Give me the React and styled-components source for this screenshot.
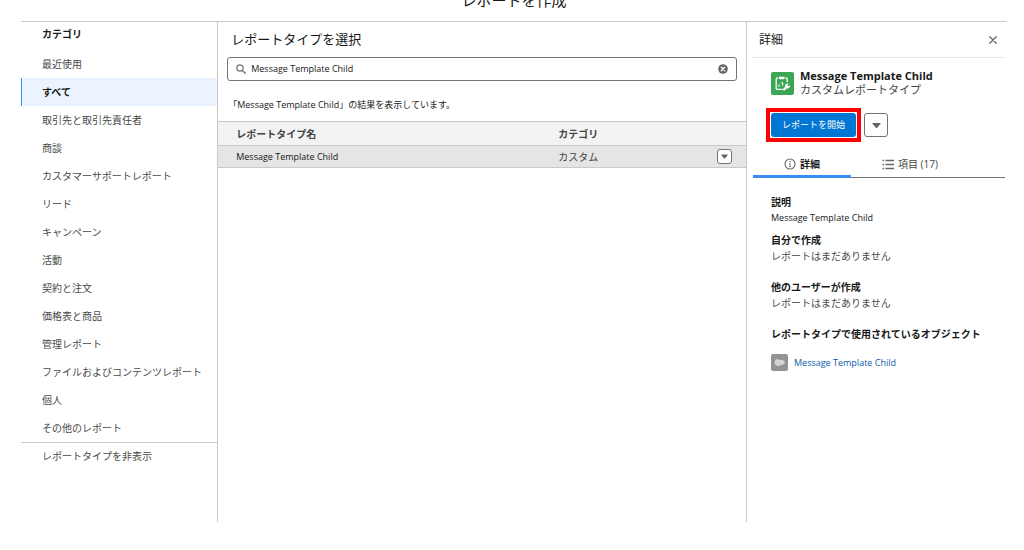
import React, { useState } from "react";
import styled, { createGlobalStyle, css } from "styled-components";

const categories = [
  "最近使用",
  "すべて",
  "取引先と取引先責任者",
  "商談",
  "カスタマーサポートレポート",
  "リード",
  "キャンペーン",
  "活動",
  "契約と注文",
  "価格表と商品",
  "管理レポート",
  "ファイルおよびコンテンツレポート",
  "個人",
  "その他のレポート",
];

const SearchIcon = () => (
  <svg width="10" height="10" viewBox="0 0 10 10" fill="none" stroke="#747474" strokeWidth="1.2" aria-hidden="true">
    <circle cx="4" cy="4" r="3.2" />
    <path d="M6.4 6.4 9.3 9.3" strokeLinecap="round" strokeWidth="1.4" />
  </svg>
);

const ClearIcon = () => (
  <svg width="10" height="10" viewBox="0 0 10 10" aria-hidden="true">
    <circle cx="5" cy="5" r="4.8" fill="#666" />
    <path d="M3.3 3.3 6.7 6.7M6.7 3.3 3.3 6.7" stroke="#fff" strokeWidth="1.3" strokeLinecap="round" />
  </svg>
);

const CloseIcon = () => (
  <svg width="8" height="8" viewBox="0 0 8 8" aria-hidden="true">
    <path d="M0.8 0.8 7.2 7.2M7.2 0.8 0.8 7.2" stroke="#666" strokeWidth="1.3" strokeLinecap="round" />
  </svg>
);

const ArrowIcon = ({ size = 7 }) => (
  <svg width={size} height={size} viewBox="0 0 8 8" aria-hidden="true">
    <path d="M0.7 1.8h6.6c.4 0 .5.4.3.7L4.4 6.3c-.2.3-.6.3-.8 0L.4 2.5c-.2-.3-.1-.7.3-.7z" fill="#666" />
  </svg>
);

const InfoIcon = () => (
  <svg width="12" height="12" viewBox="0 0 12 12" fill="none" stroke="#666" aria-hidden="true">
    <circle cx="6" cy="6" r="5" strokeWidth="1.1" />
    <path d="M6 5.3v3.2M5.2 8.5h1.6M5.3 5.3H6" strokeWidth="0.9" />
    <circle cx="6" cy="3.6" r="0.7" fill="#666" stroke="none" />
  </svg>
);

const ListIcon = () => (
  <svg width="12" height="12" viewBox="0 0 12 12" stroke="#666" aria-hidden="true">
    <path d="M3.5 2.5H12M3.5 6.5H12M3.5 10.5H12" strokeWidth="1.3" />
    <path d="M0.5 2.5H2.2M0.5 6.5H2.2M0.5 10.5H2.2" strokeWidth="1.3" />
  </svg>
);

const ReportTypeIcon = () => (
  <svg width="23" height="23" viewBox="0 0 23 23" aria-hidden="true">
    <rect width="23" height="23" rx="2" fill="#3ba755" />
    <path d="M11.5 17.4H6.4a1.2 1.2 0 0 1-1.2-1.2V7.2A1.2 1.2 0 0 1 6.4 6H7M14.4 6h.6a1.2 1.2 0 0 1 1.2 1.2v3" fill="none" stroke="#fff" strokeWidth="1.3" />
    <path d="M7.9 4.8h5.6v1.5a1 1 0 0 1-1 1H8.9a1 1 0 0 1-1-1z" fill="#fff" />
    <path d="M8 12.6v2.4M10.2 10.8h1.4v3" fill="none" stroke="#fff" strokeWidth="1.1" />
    <path d="M17.6 11.6a2.6 2.6 0 0 0-3.4 3.1l-2 2a1.1 1.1 0 0 0 1.6 1.6l2-2a2.6 2.6 0 0 0 3.1-3.4l-1.5 1.4-1.3-1.2z" fill="#fff" />
  </svg>
);

const CloudIcon = () => (
  <svg width="17" height="17" viewBox="0 0 17 17" aria-hidden="true">
    <rect width="17" height="17" rx="2" fill="#939393" />
    <path d="M7.2 5.5a2.4 2.4 0 0 1 1.8.6 2.5 2.5 0 0 1 3 .1 2.1 2.1 0 0 1 1.8 2.2 2.1 2.1 0 0 1-2.6 2 1.8 1.8 0 0 1-2.4.8 2.2 2.2 0 0 1-3.8-.1A2 2 0 0 1 3.5 9 2.2 2.2 0 0 1 4 7.4a2 2 0 0 1 3.2-1.9z" fill="#d4d4d4" />
  </svg>
);

function App() {
  const [selected, setSelected] = useState("すべて");
  const [search, setSearch] = useState("Message Template Child");
  const [tab, setTab] = useState("details");

  return (
    <>
      <GlobalStyle />
      <StyledModal>
        <StyledTitle>レポートを作成</StyledTitle>
        <StyledBody>
          <StyledSidebar>
            <StyledSidebarTitle>カテゴリ</StyledSidebarTitle>
            <nav>
              {categories.map((name) => (
                <StyledCategory key={name} $active={name === selected} onClick={() => setSelected(name)}>
                  {name}
                </StyledCategory>
              ))}
            </nav>
            <StyledSidebarFooter>
              <StyledCategory>レポートタイプを非表示</StyledCategory>
            </StyledSidebarFooter>
          </StyledSidebar>

          <StyledMain>
            <StyledMainTitle>レポートタイプを選択</StyledMainTitle>
            <StyledSearch>
              <SearchIcon />
              <input
                type="text"
                aria-label="レポートタイプを検索"
                value={search}
                onChange={(e) => setSearch(e.target.value)}
              />
              <StyledIconButton aria-label="クリア" onClick={() => setSearch("")}>
                <ClearIcon />
              </StyledIconButton>
            </StyledSearch>
            <StyledResult>「Message Template Child」の結果を表示しています。</StyledResult>
            <StyledTable>
              <thead>
                <tr>
                  <th className="name">レポートタイプ名</th>
                  <th>カテゴリ</th>
                  <th className="action"></th>
                </tr>
              </thead>
              <tbody>
                <tr>
                  <td>Message Template Child</td>
                  <td className="category">カスタム</td>
                  <td className="action">
                    <StyledMenuButton $size={15} aria-label="アクションを表示">
                      <ArrowIcon />
                    </StyledMenuButton>
                  </td>
                </tr>
              </tbody>
            </StyledTable>
          </StyledMain>

          <StyledDetail>
            <StyledDetailHeader>
              <h2>詳細</h2>
              <StyledIconButton aria-label="閉じる">
                <CloseIcon />
              </StyledIconButton>
            </StyledDetailHeader>
            <StyledRecord>
              <ReportTypeIcon />
              <div>
                <h3>Message Template Child</h3>
                <p>カスタムレポートタイプ</p>
              </div>
            </StyledRecord>
            <StyledActions>
              <StyledHighlight>
                <StyledStartButton>レポートを開始</StyledStartButton>
              </StyledHighlight>
              <StyledMenuButton $size={24} aria-label="その他のアクション">
                <ArrowIcon size={9} />
              </StyledMenuButton>
            </StyledActions>
            <StyledTabs role="tablist">
              <StyledTab role="tab" aria-selected={tab === "details"} $active={tab === "details"} onClick={() => setTab("details")}>
                <InfoIcon />
                詳細
              </StyledTab>
              <StyledTab role="tab" aria-selected={tab === "fields"} $active={tab === "fields"} onClick={() => setTab("fields")}>
                <ListIcon />
                項目 (17)
              </StyledTab>
            </StyledTabs>
            <StyledSections>
              <StyledSection>
                <h4>説明</h4>
                <StyledLatin>Message Template Child</StyledLatin>
              </StyledSection>
              <StyledSection>
                <h4>自分で作成</h4>
                <p>レポートはまだありません</p>
              </StyledSection>
              <StyledSection $spaced>
                <h4>他のユーザーが作成</h4>
                <p>レポートはまだありません</p>
              </StyledSection>
              <StyledSection $spaced>
                <h4>レポートタイプで使用されているオブジェクト</h4>
                <StyledObject href="#">
                  <CloudIcon />
                  Message Template Child
                </StyledObject>
              </StyledSection>
            </StyledSections>
          </StyledDetail>
        </StyledBody>
      </StyledModal>
    </>
  );
}

const GlobalStyle = createGlobalStyle`
  * {
    box-sizing: border-box;
  }
  body {
    margin: 0;
    background: #fff;
    color: #181818;
    font-family: "Open Sans", "Noto Sans CJK JP", sans-serif;
    font-size: 10px;
    line-height: 16px;
    overflow: hidden;
  }
  h1, h2, h3, h4, p {
    margin: 0;
    font-size: inherit;
    font-weight: 400;
  }
  button, input {
    font-family: inherit;
    font-size: inherit;
    line-height: inherit;
    color: inherit;
  }
  button {
    cursor: pointer;
  }
  svg {
    display: block;
    flex-shrink: 0;
  }
`;

const StyledModal = styled.div`
  display: flex;
  flex-direction: column;
  min-height: 100vh;
  padding: 0 17px 28px 21px;
`;

const StyledTitle = styled.h1`
  margin-top: -21px;
  font-size: 15px;
  line-height: 42px;
  text-align: center;
`;

const StyledBody = styled.div`
  display: flex;
  flex: 1;
  border-top: 1px solid #c9c9c9;
`;

const StyledSidebar = styled.aside`
  flex: 0 0 20%;
  border-right: 1px solid #c9c9c9;
`;

const StyledSidebarTitle = styled.h2`
  margin-bottom: 4px;
  padding-left: 21px;
  font-weight: 700;
  line-height: 24px;
`;

const StyledCategory = styled.button`
  display: block;
  width: 100%;
  height: 28px;
  padding: 0 0 0 20px;
  border: none;
  border-left: 1px solid transparent;
  background: none;
  color: #4a4a4a;
  text-align: left;
  ${({ $active }) =>
    $active &&
    css`
      border-left-color: #3a8ef6;
      background: #ebf4fe;
      color: #181818;
      font-weight: 700;
    `}
`;

const StyledSidebarFooter = styled.div`
  border-top: 1px solid #c9c9c9;
  ${StyledCategory} {
    height: 26px;
  }
`;

const StyledMain = styled.main`
  flex: 1;
  min-width: 0;
`;

const StyledMainTitle = styled.h2`
  padding-left: 13px;
  font-size: 13px;
  line-height: 35px;
`;

const StyledSearch = styled.div`
  display: flex;
  align-items: center;
  gap: 5px;
  height: 24px;
  margin: 0 9px;
  padding: 0 8px;
  border: 1px solid #747474;
  border-radius: 3px;
  input {
    flex: 1;
    min-width: 0;
    padding: 0;
    border: none;
    outline: none;
    background: none;
    font-size: 9px;
  }
`;

const StyledIconButton = styled.button`
  display: flex;
  padding: 0;
  border: none;
  background: none;
`;

const StyledResult = styled.p`
  padding: 16px 0 8px 10px;
  font-size: 9px;
`;

const StyledTable = styled.table`
  width: 100%;
  border-collapse: collapse;
  table-layout: fixed;
  th, td {
    height: 22px;
    padding: 0 0 0 18px;
    border-bottom: 1px solid #c9c9c9;
    text-align: left;
  }
  th {
    height: 24px;
    border-top: 1px solid #c9c9c9;
    background: #f3f3f3;
    color: #444;
    font-weight: 700;
  }
  td {
    background: #e5e5e5;
    font-size: 9px;
  }
  .name {
    width: 61%;
  }
  .category {
    color: #444;
    font-size: 10px;
  }
  .action {
    width: 47px;
  }
`;

const StyledMenuButton = styled.button`
  display: flex;
  align-items: center;
  justify-content: center;
  width: ${({ $size }) => $size}px;
  height: ${({ $size }) => $size}px;
  padding: 0;
  border: 1px solid #747474;
  border-radius: 3px;
  background: #fff;
`;

const StyledDetail = styled.aside`
  flex: 0 0 261px;
  padding: 0 2px 0 6px;
  border-left: 1px solid #c9c9c9;
`;

const StyledDetailHeader = styled.div`
  display: flex;
  align-items: center;
  justify-content: space-between;
  height: 36px;
  padding: 0 8px 0 6px;
  border-bottom: 1px solid #e5e5e5;
  h2 {
    font-size: 12px;
  }
`;

const StyledRecord = styled.div`
  display: flex;
  align-items: center;
  gap: 6px;
  padding: 11px 0 0 18px;
  h3 {
    font-size: 11px;
    font-weight: 700;
    line-height: 14px;
  }
  p {
    color: #444;
    font-size: 11px;
    line-height: 14px;
  }
`;

const StyledActions = styled.div`
  display: flex;
  align-items: center;
  gap: 3px;
  padding: 11px 0 0 13px;
`;

const StyledHighlight = styled.div`
  display: flex;
  padding: 1px;
  border: 4px solid #f00;
`;

const StyledStartButton = styled.button`
  height: 24px;
  padding: 0 11px;
  border: none;
  border-radius: 3px;
  background: #0176d3;
  color: #fff;
  font-size: 9px;
`;

const StyledTabs = styled.div`
  display: flex;
  height: 28px;
  margin-top: 8px;
  border-bottom: 1px solid #747474;
`;

const StyledTab = styled.button`
  display: flex;
  align-items: center;
  gap: 4px;
  height: 28px;
  padding: 3px 31px 0;
  border: none;
  border-bottom: 3px solid transparent;
  background: none;
  color: #444;
  ${({ $active }) =>
    $active &&
    css`
      border-bottom-color: #3a8ef6;
      color: #181818;
      font-weight: 700;
    `}
`;

const StyledSections = styled.div`
  padding: 16px 0 0 18px;
`;

const StyledSection = styled.section`
  margin-bottom: 6px;
  color: #4a4a4a;
  ${({ $spaced }) =>
    $spaced &&
    css`
      margin: 15px 0;
    `}
  h4 {
    color: #181818;
    font-weight: 700;
  }
`;

const StyledLatin = styled.p`
  color: #181818;
  font-size: 9px;
`;

const StyledObject = styled.a`
  display: inline-flex;
  align-items: center;
  gap: 6px;
  margin-top: 12px;
  color: #0b5cab;
  font-size: 9px;
  text-decoration: none;
`;

export default App;
